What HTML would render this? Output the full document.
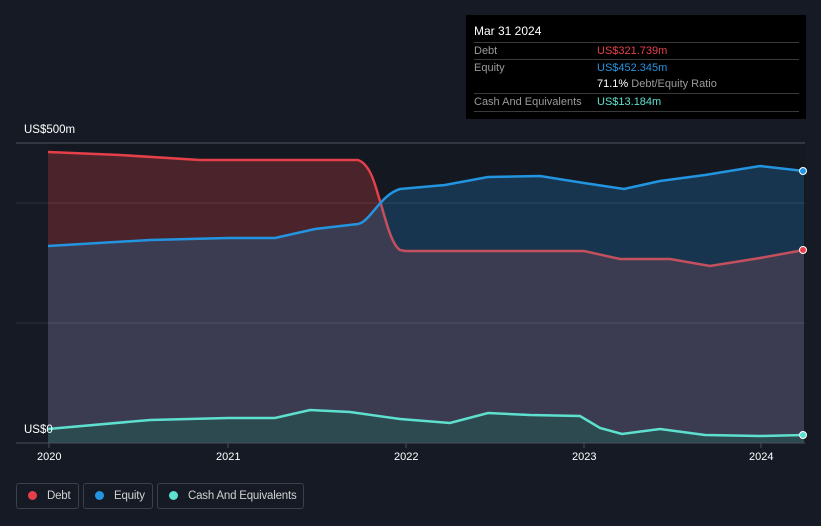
<!DOCTYPE html>
<html><head><meta charset="utf-8"><style>
body{margin:0;width:821px;height:526px;background:#151a24;font-family:"Liberation Sans",sans-serif;overflow:hidden;position:relative}
.t{position:absolute;color:#fff;font-size:11px;white-space:nowrap}
.tip{position:absolute;left:466px;top:15px;width:340px;height:104px;background:#000}
.row{position:absolute;left:8px;width:325px;border-top:1px solid #3a3a3a;font-size:11px;color:#9a9a9a;white-space:nowrap}
.leg{position:absolute;top:483px;height:26px;border:1px solid #3b404a;border-radius:3px;color:#d0d0d0;font-size:11.5px;letter-spacing:-0.2px;line-height:24px;box-sizing:border-box;white-space:nowrap}
.dot{display:inline-block;width:9px;height:9px;border-radius:50%;margin:0 10px 0 11px;vertical-align:-1px}
</style></head><body>
<svg width="821" height="526" style="position:absolute;left:0;top:0">
<rect x="48" y="143" width="757" height="300" fill="#131821"/>
<path d="M48,152 L120,155 L200,160 L280,160 L358,160 C372,165 380,210 390,235 C395,248 398,251 405,251 L584,251 L620,259 L670,259 L710,266 L760,258 L804,250 L804,443 L48,443Z" fill="#4a232b"/>
<path d="M48,246 L150,240 L228,238 L275,238 L315,229 L358,224 C370,222 380,195 400,189 L445,185 L488,177 L540,176 L584,183 L624,189 L660,181 L705,175 L760,166 L804,171 L804,443 L48,443Z" fill="#17354f"/>
<path d="M48,246 L150,240 L228,238 L275,238 L315,229 L358,224 C366,222 374,212 381,204 C386,222 392,245 400,250 L405,251 L584,251 L620,259 L670,259 L710,266 L760,258 L804,250 L804,443 L48,443Z" fill="#3b3c52"/>
<path d="M48,429 L150,420 L228,418 L275,418 L310,410 L350,412 L400,419 L450,423 L488,413 L530,415 L580,416 L600,428 L622,434 L660,429 L705,435 L760,436 L804,435 L804,443 L48,443Z" fill="#2d4a50"/>
<line x1="16" y1="143" x2="805" y2="143" stroke="#50555f"/>
<line x1="16" y1="203" x2="805" y2="203" stroke="#ffffff" stroke-opacity="0.1"/>
<line x1="16" y1="323" x2="805" y2="323" stroke="#ffffff" stroke-opacity="0.1"/>
<path d="M48,152 L120,155 L200,160 L280,160 L358,160 C372,165 376,190 381,204" fill="none" stroke="#e5404a" stroke-width="2.5"/>
<path d="M381,204 C386,222 392,245 400,250 L405,251 L584,251 L620,259 L670,259 L710,266 L760,258 L804,250" fill="none" stroke="#c4505e" stroke-width="2.5"/>
<path d="M48,246 L150,240 L228,238 L275,238 L315,229 L358,224 C370,222 380,195 400,189 L445,185 L488,177 L540,176 L584,183 L624,189 L660,181 L705,175 L760,166 L804,171" fill="none" stroke="#2394e0" stroke-width="2.5"/>
<path d="M48,429 L150,420 L228,418 L275,418 L310,410 L350,412 L400,419 L450,423 L488,413 L530,415 L580,416 L600,428 L622,434 L660,429 L705,435 L760,436 L804,435" fill="none" stroke="#5ee0cf" stroke-width="2.5"/>
<line x1="16" y1="443" x2="805" y2="443" stroke="#4a4f5a"/>
<g stroke="#4a4f5a"><line x1="49" y1="443" x2="49" y2="448"/><line x1="228" y1="443" x2="228" y2="448"/><line x1="406" y1="443" x2="406" y2="448"/><line x1="584" y1="443" x2="584" y2="448"/><line x1="761" y1="443" x2="761" y2="448"/></g>
<circle cx="803" cy="250" r="3.5" fill="#e5404a" stroke="#fff" stroke-width="1"/>
<circle cx="803" cy="171" r="3.5" fill="#2394e0" stroke="#fff" stroke-width="1"/>
<circle cx="803" cy="435" r="3.5" fill="#5ee0cf" stroke="#fff" stroke-width="1"/>
</svg>
<div class="t" style="left:24px;top:124px;font-size:11.5px">US$500m</div>
<div class="t" style="left:24px;top:424px;font-size:11.5px">US$0</div>
<div class="t" style="left:37px;top:451px">2020</div>
<div class="t" style="left:216px;top:451px">2021</div>
<div class="t" style="left:394px;top:451px">2022</div>
<div class="t" style="left:572px;top:451px">2023</div>
<div class="t" style="left:749px;top:451px">2024</div>
<div class="tip">
<div class="t" style="left:8px;top:9px;font-size:12px">Mar 31 2024</div>
<div class="row" style="top:27px;height:17px;line-height:17px">Debt<span style="position:absolute;left:123px;color:#e5404a">US$321.739m</span></div>
<div class="row" style="top:44px;height:17px;line-height:17px">Equity<span style="position:absolute;left:123px;color:#2394e0">US$452.345m</span></div>
<div style="position:absolute;left:131px;top:61px;font-size:11px;line-height:17px;color:#9a9a9a;white-space:nowrap"><span style="color:#fff">71.1%</span> Debt/Equity Ratio</div>
<div class="row" style="top:78px;height:17px;line-height:17px;border-bottom:1px solid #3a3a3a">Cash And Equivalents<span style="position:absolute;left:123px;color:#5ee0cf">US$13.184m</span></div>
</div>
<div class="leg" style="left:16px;width:63px"><span class="dot" style="background:#e5404a"></span>Debt</div>
<div class="leg" style="left:83px;width:70px"><span class="dot" style="background:#2394e0"></span>Equity</div>
<div class="leg" style="left:157px;width:147px"><span class="dot" style="background:#5ee0cf"></span>Cash And Equivalents</div>
</body></html>
